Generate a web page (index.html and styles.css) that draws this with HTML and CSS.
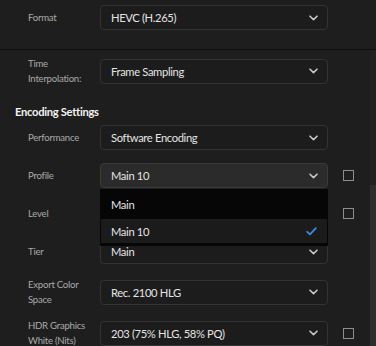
FILE: index.html
```html
<!DOCTYPE html>
<html>
<head>
<meta charset="utf-8">
<link rel="stylesheet" href="styles.css">
</head>
<body>
<div class="panel">
  <div class="top">
    <div class="row">
      <div class="label">Format</div>
      <div class="select"><span class="value">HEVC (H.265)</span><svg class="chev" width="9" height="6" viewBox="0 0 9 6"><path d="M1 1.2 L4.5 4.6 L8 1.2" fill="none" stroke="#c8c8c8" stroke-width="1.6" stroke-linecap="round" stroke-linejoin="round"/></svg></div>
    </div>
  </div>
  <div class="body">
    <div class="content">
      <div class="row tall">
        <div class="label">Time<br>Interpolation:</div>
        <div class="select"><span class="value">Frame Sampling</span><svg class="chev" width="9" height="6" viewBox="0 0 9 6"><path d="M1 1.2 L4.5 4.6 L8 1.2" fill="none" stroke="#c8c8c8" stroke-width="1.6" stroke-linecap="round" stroke-linejoin="round"/></svg></div>
      </div>
      <div class="heading">Encoding Settings</div>
      <div class="row first">
        <div class="label">Performance</div>
        <div class="select"><span class="value">Software Encoding</span><svg class="chev" width="9" height="6" viewBox="0 0 9 6"><path d="M1 1.2 L4.5 4.6 L8 1.2" fill="none" stroke="#c8c8c8" stroke-width="1.6" stroke-linecap="round" stroke-linejoin="round"/></svg></div>
      </div>
      <div class="row">
        <div class="label">Profile</div>
        <div class="select open"><span class="value">Main 10</span><svg class="chev" width="9" height="6" viewBox="0 0 9 6"><path d="M1 1.2 L4.5 4.6 L8 1.2" fill="none" stroke="#c8c8c8" stroke-width="1.6" stroke-linecap="round" stroke-linejoin="round"/></svg>
          <div class="menu">
            <div class="item">Main</div>
            <div class="item active">Main 10<svg class="check" width="11" height="9" viewBox="0 0 11 9"><path d="M1.2 4.8 L4 7.4 L9.8 1.2" fill="none" stroke="#3d8ae6" stroke-width="1.8" stroke-linecap="round" stroke-linejoin="round"/></svg></div>
          </div>
        </div>
        <div class="checkbox"></div>
      </div>
      <div class="row">
        <div class="label">Level</div>
        <div class="select"><span class="value"></span><svg class="chev" width="9" height="6" viewBox="0 0 9 6"><path d="M1 1.2 L4.5 4.6 L8 1.2" fill="none" stroke="#c8c8c8" stroke-width="1.6" stroke-linecap="round" stroke-linejoin="round"/></svg></div>
        <div class="checkbox"></div>
      </div>
      <div class="row">
        <div class="label">Tier</div>
        <div class="select"><span class="value">Main</span><svg class="chev" width="9" height="6" viewBox="0 0 9 6"><path d="M1 1.2 L4.5 4.6 L8 1.2" fill="none" stroke="#c8c8c8" stroke-width="1.6" stroke-linecap="round" stroke-linejoin="round"/></svg></div>
      </div>
      <div class="row tall">
        <div class="label">Export Color<br>Space</div>
        <div class="select"><span class="value">Rec. 2100 HLG</span><svg class="chev" width="9" height="6" viewBox="0 0 9 6"><path d="M1 1.2 L4.5 4.6 L8 1.2" fill="none" stroke="#c8c8c8" stroke-width="1.6" stroke-linecap="round" stroke-linejoin="round"/></svg></div>
      </div>
      <div class="row tall">
        <div class="label">HDR Graphics<br>White (Nits)</div>
        <div class="select"><span class="value">203 (75% HLG, 58% PQ)</span><svg class="chev" width="9" height="6" viewBox="0 0 9 6"><path d="M1 1.2 L4.5 4.6 L8 1.2" fill="none" stroke="#c8c8c8" stroke-width="1.6" stroke-linecap="round" stroke-linejoin="round"/></svg></div>
        <div class="checkbox"></div>
      </div>
    </div>
    <div class="scrollbar"><div class="thumb"></div></div>
  </div>
</div>
</body>
</html>
```
FILE: styles.css
```css
html, body {
  margin: 0;
  padding: 0;
  background: #1e1e1e;
}
body {
  width: 376px;
  height: 346px;
  overflow: hidden;
  font-family: Lato, "Open Sans", sans-serif;
}
.panel {
  display: flex;
  flex-direction: column;
  height: 346px;
  overflow: hidden;
}
.top {
  padding-top: 5px;
  height: 44px;
  border-bottom: 1px solid #0f0f0f;
}
.body {
  display: flex;
  flex: 1;
  min-height: 0;
}
.content {
  flex: 1;
  padding-top: 6px;
}
.scrollbar {
  width: 6px;
  background: #222222;
  display: flex;
  flex-direction: column;
}
.thumb {
  margin-top: 135px;
  flex: 1;
  background: #2d2d2d;
}
.row {
  display: grid;
  grid-template-columns: 72px 228px 26px;
  align-items: center;
  padding-left: 28px;
  height: 25px;
  margin-top: 13px;
}
.top .row, .content > .row:first-child {
  margin-top: 0;
}
.row.first {
  margin-top: 4px;
}
.row.tall {
  height: 29px;
}
.content > .row.tall + .row.tall {
  margin-top: 12px;
}
.label {
  font-size: 9.6px;
  letter-spacing: -0.25px;
  line-height: 15px;
  color: #a9a9a9;
}
.select {
  position: relative;
  box-sizing: border-box;
  height: 25px;
  border: 1px solid #333333;
  border-radius: 4px;
  background: #1c1c1c;
  display: flex;
  align-items: center;
  justify-content: space-between;
  padding: 0 9px 0 10px;
}
.select.open {
  background: #2b2b2b;
  border-color: #3a3a3a;
}
.value {
  font-size: 11.2px;
  letter-spacing: -0.35px;
  color: #e4e4e4;
}
.chev {
  display: block;
}
.checkbox {
  box-sizing: border-box;
  width: 11px;
  height: 11px;
  border: 1.5px solid #8e8e8e;
  margin-left: 15px;
}
.heading {
  margin-top: 18px;
  padding-left: 15px;
  font-size: 11.2px;
  letter-spacing: -0.3px;
  line-height: 18px;
  font-weight: 700;
  color: #f2f2f2;
}
.menu {
  position: absolute;
  left: -1px;
  right: -1px;
  top: 25px;
  z-index: 2;
  background: #060606;
  border: 1px solid #060606;
  border-bottom-width: 3px;
}
.item {
  display: flex;
  align-items: center;
  justify-content: space-between;
  padding: 0 10px 0 10px;
  height: 29px;
  font-size: 11.2px;
  letter-spacing: -0.35px;
  color: #e4e4e4;
  background: #060606;
}
.item.active {
  height: 24px;
  background: #1b1b1b;
}
.check {
  display: block;
}
```
